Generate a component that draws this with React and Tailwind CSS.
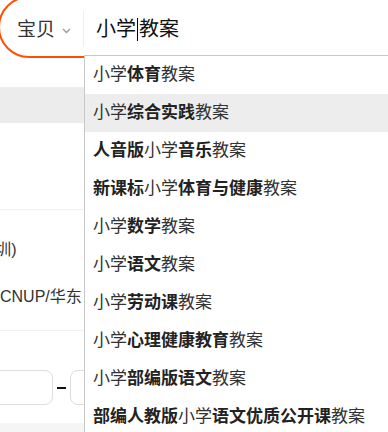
import React from "react";

const items = [
  [["小学", 0], ["体育", 1], ["教案", 0]],
  [["小学", 0], ["综合实践", 1], ["教案", 0]],
  [["人音版", 1], ["小学", 0], ["音乐", 1], ["教案", 0]],
  [["新课标", 1], ["小学", 0], ["体育与健康", 1], ["教案", 0]],
  [["小学", 0], ["数学", 1], ["教案", 0]],
  [["小学", 0], ["语文", 1], ["教案", 0]],
  [["小学", 0], ["劳动课", 1], ["教案", 0]],
  [["小学", 0], ["心理健康教育", 1], ["教案", 0]],
  [["小学", 0], ["部编版语文", 1], ["教案", 0]],
  [["部编人教版", 1], ["小学", 0], ["语文优质公开课", 1], ["教案", 0]],
];

export default function App() {
  return (
    <div
      className="relative w-[388px] h-[432px] overflow-hidden bg-white"
      style={{ fontFamily: '"Liberation Sans", "Noto Sans CJK SC", sans-serif' }}
    >
      {/* search bar */}
      <div className="-mt-[4px] -ml-[2px] w-[440px] h-[62px] rounded-l-[31px] border-2 border-[#ff5000] flex items-center">
        <div className="flex items-center pl-[17px] pt-[4px]">
          <span className="text-[19px] text-[#333] leading-none">宝贝</span>
          <svg width="9" height="6" viewBox="0 0 9 6" className="ml-[7px] mt-[3px]">
            <path d="M1 1 L4.5 4.5 L8 1" fill="none" stroke="#999" strokeWidth="1.3" />
          </svg>
          <div className="ml-[12px] w-px h-[36px] bg-[#eeeeee]" />
          <span className="ml-[12px] text-[20px] text-[#111] leading-none flex items-center">
            小学<span className="inline-block w-px h-[23px] bg-black mx-[1px]" />教案
          </span>
        </div>
      </div>

      {/* underlying page content */}
      <div className="flex flex-col">
        <div className="h-[29px]" />
        <div className="h-[36px] bg-[#ececec]" />
        <div className="h-[86px]" />
        <div className="h-px bg-[#f0f0f0]" />
        <div className="h-[29px]" />
        <div className="h-[22px] overflow-hidden whitespace-nowrap text-[16px] text-[#333] leading-[22px]">
          <span className="-ml-[26px] inline-block">(深圳)</span>
        </div>
        <div className="h-[25px]" />
        <div className="h-[22px] whitespace-nowrap text-[16px] text-[#333] leading-[22px]">
          CNUP/华东
        </div>
        <div className="h-[22px]" />
        <div className="h-px bg-[#f0f0f0]" />
        <div className="h-[39px]" />
        <div className="flex items-center h-[35px]">
          <div className="-ml-[10px] w-[63px] h-[35px] rounded-[8px] border border-[#dddddd]" />
          <span className="ml-[4px] w-[9px] h-[2px] bg-[#111]" />
          <div className="ml-[4px] w-[60px] h-[35px] rounded-[8px] border border-[#dddddd]" />
        </div>
        <div className="h-[18px]" />
        <div className="h-[40px] bg-[#f5f5f5]" />
      </div>

      {/* suggestion dropdown */}
      <div className="absolute left-[84px] top-[55px] w-[340px] border border-[#c8c8c8] bg-white">
        {items.map((row, i) => (
          <div
            key={i}
            className={
              "h-[38px] flex items-center pl-[8px] text-[17px] whitespace-nowrap " +
              (i === 1 ? "bg-[#ededed]" : "")
            }
          >
            {row.map(([t, b], j) =>
              b ? (
                <span key={j} className="font-bold text-[#222]">{t}</span>
              ) : (
                <span key={j} className="text-[#333]">{t}</span>
              )
            )}
          </div>
        ))}
      </div>
    </div>
  );
}
